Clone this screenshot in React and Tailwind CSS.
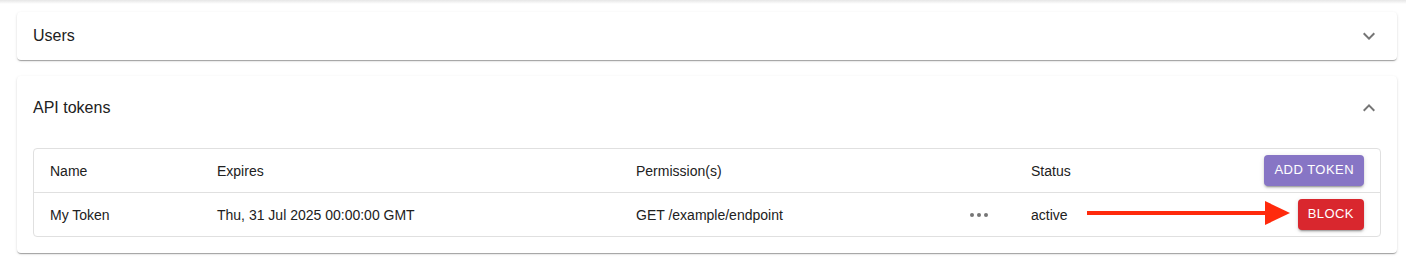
import React from 'react';

const cardShadow = 'shadow-[0px_2px_1px_-1px_rgba(0,0,0,0.2),0px_1px_1px_0px_rgba(0,0,0,0.14),0px_1px_3px_0px_rgba(0,0,0,0.12)]';
const btnShadow = 'shadow-[0px_3px_1px_-2px_rgba(0,0,0,0.2),0px_2px_2px_0px_rgba(0,0,0,0.14),0px_1px_5px_0px_rgba(0,0,0,0.12)]';

const Chevron = ({ up = false }) => (
    <svg viewBox="0 0 24 24" className="w-6 h-6 fill-[#757575]">
        {up ? (
            <path d="m12 8-6 6 1.41 1.41L12 10.83l4.59 4.58L18 14z" />
        ) : (
            <path d="M16.59 8.59 12 13.17 7.41 8.59 6 10l6 6 6-6z" />
        )}
    </svg>
);

const Arrow = () => (
    <svg width="206" height="26" viewBox="0 0 206 26" className="absolute left-[1053px] top-[7px]">
        <rect x="0" y="11" width="180" height="4" fill="#ff2a0c" />
        <polygon points="178,1 203,13 178,25" fill="#ff2a0c" />
    </svg>
);

const cols = 'grid grid-cols-[167px_419px_334px_61px_1fr] items-center';

const App = () => {
    return (
        <div className="w-[1406px] h-[269px] bg-white text-[#212121] font-['Liberation_Sans',Arial,sans-serif] overflow-hidden">
            <div className="h-1 bg-gradient-to-b from-[#e6e6e6] to-white" />

            <div className="pl-[17px] pr-[9px] pt-2 flex flex-col gap-4">
                {/* Users */}
                <div className={`bg-white rounded ${cardShadow}`}>
                    <div className="h-12 px-4 flex items-center justify-between">
                        <span className="text-base">Users</span>
                        <Chevron />
                    </div>
                </div>

                {/* API tokens */}
                <div className={`bg-white rounded ${cardShadow}`}>
                    <div className="h-16 px-4 flex items-center justify-between">
                        <span className="text-base">API tokens</span>
                        <Chevron up />
                    </div>

                    <div className="px-4 pt-2 pb-4">
                        <div className="border border-[#e0e0e0] rounded text-sm">
                            <div className={`${cols} h-[44px] border-b border-[#e0e0e0]`}>
                                <div className="px-4">Name</div>
                                <div className="px-4">Expires</div>
                                <div className="px-4">Permission(s)</div>
                                <div />
                                <div className="px-4 flex items-center justify-between">
                                    <span>Status</span>
                                    <button className={`h-[31px] px-[10px] rounded bg-[#8775c5] text-white text-[13px] font-medium tracking-[0.46px] uppercase ${btnShadow}`}>
                                        Add token
                                    </button>
                                </div>
                            </div>

                            <div className={`${cols} h-[43px] relative`}>
                                <div className="px-4">My Token</div>
                                <div className="px-4">Thu, 31 Jul 2025 00:00:00 GMT</div>
                                <div className="px-4">GET /example/endpoint</div>
                                <div className="px-4 flex items-center gap-[3px]">
                                    <span className="w-1 h-1 rounded-full bg-[#757575]" />
                                    <span className="w-1 h-1 rounded-full bg-[#757575]" />
                                    <span className="w-1 h-1 rounded-full bg-[#757575]" />
                                </div>
                                <div className="px-4 flex items-center justify-between">
                                    <span>active</span>
                                    <button className={`h-[31px] px-[10px] rounded bg-[#d9272e] text-white text-[13px] font-medium tracking-[0.46px] uppercase ${btnShadow}`}>
                                        Block
                                    </button>
                                </div>
                                <Arrow />
                            </div>
                        </div>
                    </div>
                </div>
            </div>
        </div>
    );
};

export default App;
